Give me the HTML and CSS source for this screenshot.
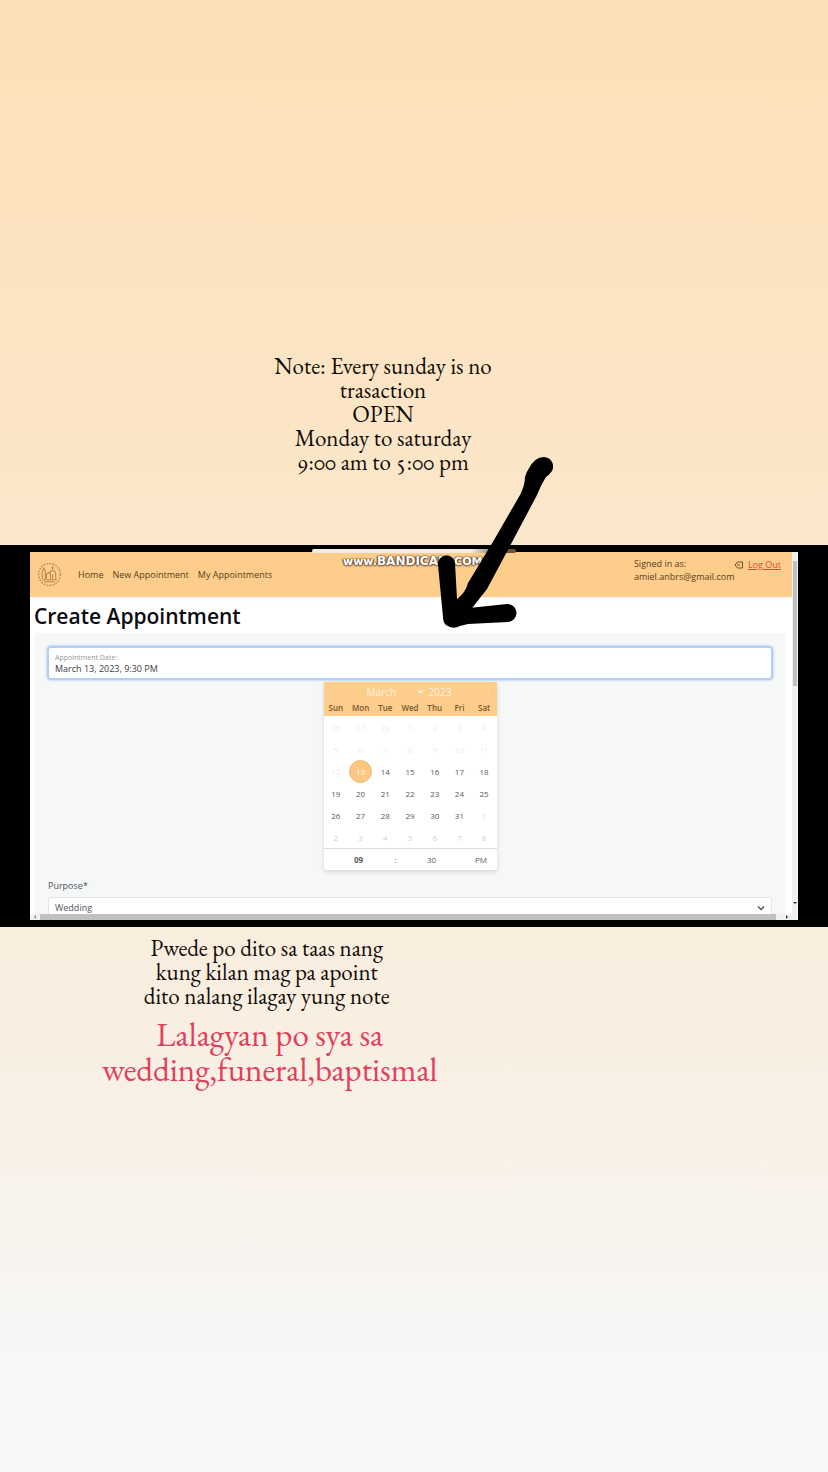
FILE: index.html
```html
<!DOCTYPE html>
<html lang="en">
<head>
<meta charset="utf-8">
<meta name="viewport" content="width=device-width, initial-scale=1">
<title>Create Appointment</title>
<link rel="stylesheet" href="styles.css">
</head>
<body>
<main class="story">
  <p class="note note-top">Note: Every sunday is no<br>trasaction<br>OPEN<br>Monday to saturday<br><span class="oldstyle">9:00 am to 5:00 pm</span></p>

  <section class="frame">
    <div class="screen">
      <div class="page">
        <header class="nav">
          <svg class="logo" viewBox="0 0 24 24" fill="none" stroke="#b9834c" aria-hidden="true">
            <circle cx="12" cy="12" r="10.5" stroke-width="1.300" stroke-dasharray="1.6 1.3"/>
            <path d="M5 16V9l1.500-3L8 9v7M9 16v-4l2-2 2 2v4M12 11c1-4 6-4 6 1v4M5 17h14M15 7V4M14 5.500h2M15 16v-4M7 19h10" stroke-width="1"/>
          </svg>
          <nav class="links">
            <a href="#home">Home</a>
            <a href="#new">New Appointment</a>
            <a href="#mine">My Appointments</a>
          </nav>
          <div class="user"><span>Signed in as:</span><span>amiel.anbrs@gmail.com</span></div>
          <div class="logout">
            <svg class="logout-icon" viewBox="0 0 10 8" fill="none" stroke="#6d4b2a" aria-hidden="true"><path d="M3.500 1h5v6h-5L1 4zM3 4h3"/></svg>
            <a href="#logout">Log Out</a>
          </div>
        </header>
        <h1 class="title">Create Appointment</h1>
        <form class="panel">
          <div class="field">
            <label for="date">Appointment Date:</label>
            <input id="date" type="text" value="March 13, 2023, 9:30 PM">
          </div>
          <div class="calendar">
            <div class="cal-head">
              <div class="cal-month">
                <select aria-label="Month"><option>March</option></select>
                <svg class="month-arrow" viewBox="0 0 6 6" fill="none" stroke="#fff" aria-hidden="true"><path d="M1 2l2 2 2-2"/></svg>
                <input type="text" value="2023" aria-label="Year">
                <button class="next" type="button" aria-label="Next month">›</button>
              </div>
              <div class="week"><span>Sun</span><span>Mon</span><span>Tue</span><span>Wed</span><span>Thu</span><span>Fri</span><span>Sat</span></div>
            </div>
            <div class="days">
              <button type="button" class="off">26</button><button type="button" class="off">27</button><button type="button" class="off">28</button><button type="button" class="off">1</button><button type="button" class="off">2</button><button type="button" class="off">3</button><button type="button" class="off">4</button>
              <button type="button" class="off">5</button><button type="button" class="off">6</button><button type="button" class="off">7</button><button type="button" class="off">8</button><button type="button" class="off">9</button><button type="button" class="off">10</button><button type="button" class="off">11</button>
              <button type="button" class="off">12</button><button type="button" class="picked">13</button><button type="button">14</button><button type="button">15</button><button type="button">16</button><button type="button">17</button><button type="button">18</button>
              <button type="button">19</button><button type="button">20</button><button type="button">21</button><button type="button">22</button><button type="button">23</button><button type="button">24</button><button type="button">25</button>
              <button type="button">26</button><button type="button">27</button><button type="button">28</button><button type="button">29</button><button type="button">30</button><button type="button">31</button><button type="button" class="later">1</button>
              <button type="button" class="later">2</button><button type="button" class="later">3</button><button type="button" class="later">4</button><button type="button" class="later">5</button><button type="button" class="later">6</button><button type="button" class="later">7</button><button type="button" class="later">8</button>
            </div>
            <div class="time">
              <input class="hour" type="text" value="09" aria-label="Hour">
              <span>:</span>
              <input type="text" value="30" aria-label="Minute">
              <button type="button">PM</button>
            </div>
          </div>
          <label class="purpose-label" for="purpose">Purpose*</label>
          <div class="purpose">
            <select id="purpose"><option>Wedding</option></select>
            <svg class="purpose-arrow" viewBox="0 0 8 6" fill="none" stroke="#555" stroke-width="1.300" aria-hidden="true"><path d="M1 1.500l3 3 3-3"/></svg>
          </div>
        </form>
      </div>
      <div class="vbar" aria-hidden="true"><span class="vthumb"></span><svg class="down" viewBox="0 0 4 4"><path d="M0 1h4L2 3z" fill="#333"/></svg></div>
      <div class="hbar" aria-hidden="true"><svg viewBox="0 0 4 4"><path d="M3 0v4L1 2z" fill="#888"/></svg><span class="hthumb"></span><svg viewBox="0 0 4 4"><path d="M1 0v4l2-2z" fill="#333"/></svg></div>
    </div>
    <span class="tab" aria-hidden="true"></span>
    <span class="watermark"><small>www.</small>BANDICAM<small>.COM</small></span>
    <svg class="arrow" viewBox="0 0 120 180" aria-hidden="true">
      <path d="M89 18Q95 5 105 5A9.500 9.500 0 0 1 113 19Q110 23 107 25Q103 31 98 43L72 92 48 137 30 160 13 167 18 147Q27 140 29 131L55 88 81 43Q86 33 86 25 87 21 89 18Z"/>
      <path d="M-1 113A8.500 8.500 0 0 1 16 111L18 147 30 156 68 152A9 9 0 0 1 69 170L29 172 21 174Q14 178 7 173Q4 170 4 165Z"/>
    </svg>
  </section>

  <div class="bottom">
    <p class="note">Pwede po dito sa taas nang<br>kung kilan mag pa apoint<br>dito nalang ilagay yung note</p>
    <p class="note red">Lalagyan po sya sa<br>wedding,funeral,baptismal</p>
  </div>
</main>
</body>
</html>
```
FILE: styles.css
```css
* { box-sizing: border-box; }
body { margin: 0; font-family: "Open Sans", "Noto Sans", sans-serif; }
button, input, select {
  font: inherit; color: inherit; background: none; border: 0; padding: 0; margin: 0;
  min-width: 0; appearance: none; outline: 0;
}
p, h1 { margin: 0; }

.story {
  min-height: 100vh;
  background: linear-gradient(#fee0b6 0%, #fbe6c8 32%, #f9eedf 66%, #f8f2e9 79%, #f7f7f7 92%, #f8f8f8 100%);
}
.note {
  font-family: "EB Garamond", "Liberation Serif", serif;
  font-size: 23px; line-height: 24px; text-align: center; color: #110b08;
}
.note-top { padding: 354px 62px 71px 0; }
.oldstyle { font-variant-numeric: oldstyle-nums; }
.bottom { width: max-content; padding: 9px 0 0 102px; }
.red { font-size: 33px; line-height: 35px; color: #e33e5b; padding: 9px 0 0; }
.bottom .note:first-child { padding-right: 6px; }

.frame { position: relative; background: #000; padding: 7px 30px; }
.screen { display: grid; grid-template-columns: 1fr 6px; background: #fff; }
.page { min-width: 0; }

.nav {
  display: flex; align-items: center; height: 45px; padding: 0 11px 0 7px;
  background: #fdcd8b; font-size: 9px; line-height: 13px; color: #5b3d20;
}
.logo { width: 25px; height: 25px; }
.links { display: flex; gap: 9px; margin-left: 16px; flex: 1; }
.links a { color: inherit; text-decoration: none; }
.user { display: flex; flex-direction: column; width: 100px; align-self: flex-start; padding-top: 5px; }
.logout { display: flex; align-items: center; gap: 4px; align-self: flex-start; padding-top: 6px; }
.logout a { color: #dc4b37; }
.logout-icon { width: 10px; height: 8px; }

.title { font-size: 21px; line-height: 38px; height: 36px; font-weight: 600; color: #0b0b12; padding: 0 4px; }
.panel { margin: 0 6px 0 5px; padding: 13px 13px 0 12px; background: #f6f8f8; height: 281px; overflow: hidden; }
.field {
  display: flex; flex-direction: column; height: 34px; padding: 4px 6px; background: #fff;
  border: 2px solid #b5cff2; border-radius: 4px; box-shadow: 0 0 2px 1px #c8dbf4;
}
.field label { font-size: 7px; line-height: 11px; color: #93979b; }
.field input { font-size: 9px; line-height: 12px; color: #3c4045; }

.calendar {
  width: 173px; margin: 2px auto 9px; background: #fff; border-radius: 2px;
  box-shadow: 0 2px 5px #0002; font-size: 8px; color: #5a5a5a;
}
.cal-head { background: #fdcd8b; }
.cal-month { display: flex; align-items: center; height: 19px; font-size: 10px; color: #fff3df; padding: 0 6px 0 43px; }
.cal-month select { width: 50px; }
.cal-month input { width: 30px; margin-left: 5px; }
.month-arrow { width: 7px; height: 7px; }
.next { margin-left: auto; color: #fde0b5; }
.week, .days { display: grid; grid-template-columns: repeat(7, 1fr); text-align: center; }
.week { height: 15px; line-height: 14px; font-weight: 600; color: #79562f; }
.days button { height: 22px; }
.days .off { color: #ededed; }
.days .later { color: #d2d2d2; }
.days .picked { background: #fdc681; border: 1px solid #efb873; border-radius: 50%; color: #fff; width: 23px; height: 23px; justify-self: center; margin-bottom: -1px; }
.time {
  display: grid; grid-template-columns: 70px 4px 68px 1fr; height: 22px; align-items: center;
  border-top: 1px solid #ddd; text-align: center;
}
.time input { text-align: center; }
.time .hour { font-weight: 700; }

.purpose-label { display: block; font-size: 9px; line-height: 14px; color: #50545a; padding-left: 1px; }
.purpose { position: relative; margin: 4px 1px 0; }
.purpose select {
  display: block; width: 100%; height: 21px; padding: 0 6px; background: #fff; border: 1px solid #e3e5e8;
  border-radius: 3px; font-size: 9px; color: #50545a;
}
.purpose-arrow { position: absolute; right: 7px; top: 8px; width: 8px; height: 6px; }

.vbar { display: flex; flex-direction: column; justify-content: space-between; align-items: center; padding: 9px 1px; background: #f1f1f1; }
.vthumb { width: 4px; height: 125px; background: #bfbfc4; }
.down { width: 4px; height: 4px; }
.hbar { grid-column: 1 / -1; display: flex; align-items: center; gap: 3px; height: 6px; padding: 0 9px 0 3px; background: #f1f1f1; }
.hbar svg { width: 4px; height: 4px; }
.hthumb { flex: 1; height: 6px; background: #c1c1c1; margin-right: 6px; }

.tab {
  position: absolute; top: 4px; left: calc(50% - 102px); width: 204px; height: 4px;
  border-radius: 2px; background: linear-gradient(90deg, #f3eadf 0 78%, #6b5136 94%);
}
.watermark {
  position: absolute; top: 9px; left: calc(50% - 71px); font: 600 12px/14px "DejaVu Sans", sans-serif;
  color: #fff; text-shadow: 0 0 2px #6b4f33, 0 1px 2px #6b4f33, 1px 0 1px #6b4f33, -1px 0 1px #6b4f33;
}
.watermark small { font-size: 11px; }
.arrow { position: absolute; top: -93px; left: calc(50% + 25px); width: 120px; height: 180px; overflow: visible; }
```
